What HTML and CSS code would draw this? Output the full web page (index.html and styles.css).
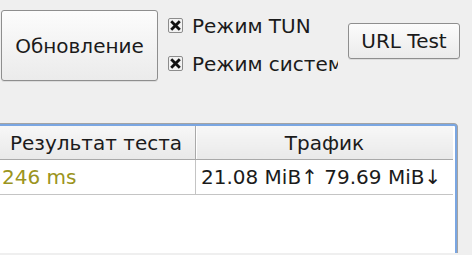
FILE: index.html
```html
<!DOCTYPE html>
<html lang="ru">
<head>
    <meta charset="UTF-8">
    <meta name="viewport" content="width=device-width, initial-scale=1.0">
    <title>Подключения</title>
    <link rel="stylesheet" href="styles.css">
</head>
<body>
    <div class="toolbar">
        <button class="btn btn-update">Обновление</button>
        <div class="checks">
            <label class="check">
                <svg class="box" width="15" height="15" viewBox="0 0 15 15">
                    <rect x="0.5" y="0.5" width="14" height="14" rx="1.5" fill="#f2f2f2" stroke="#8c8c8c"/>
                    <path d="M4.2 4.2 L10.8 10.8 M10.8 4.2 L4.2 10.8" stroke="#111" stroke-width="2.8" stroke-linecap="square"/>
                </svg>
                <span>Режим TUN</span>
            </label>
            <label class="check">
                <svg class="box" width="15" height="15" viewBox="0 0 15 15">
                    <rect x="0.5" y="0.5" width="14" height="14" rx="1.5" fill="#f2f2f2" stroke="#8c8c8c"/>
                    <path d="M4.2 4.2 L10.8 10.8 M10.8 4.2 L4.2 10.8" stroke="#111" stroke-width="2.8" stroke-linecap="square"/>
                </svg>
                <span>Режим системного прокси</span>
            </label>
        </div>
        <button class="btn btn-test">URL Test</button>
    </div>

    <div class="table-frame">
        <table class="results">
            <thead>
                <tr>
                    <th class="col-result">Результат теста</th>
                    <th class="col-traffic">Трафик</th>
                </tr>
            </thead>
            <tbody>
                <tr>
                    <td class="latency">246 ms</td>
                    <td>21.08 MiB↑ 79.69 MiB↓</td>
                </tr>
            </tbody>
        </table>
    </div>
</body>
</html>
```

FILE: styles.css
```css
body {
    margin: 0;
    background: #efefef;
    font-family: "DejaVu Sans", "Noto Sans", sans-serif;
    font-size: 20px;
    color: #1b1b1b;
    height: 255px;
    overflow: hidden;
}
.toolbar {
    display: flex;
    align-items: center;
    padding: 10px 0 0 1px;
    height: 71px;
}
.btn {
    font-family: inherit;
    font-size: 20px;
    color: #1b1b1b;
    border: 1px solid #8e8e8e;
    border-radius: 3px;
    background: linear-gradient(to bottom, #fcfcfc, #ebebeb);
    box-shadow: 0 1px 0 rgba(0, 0, 0, 0.08);
    padding: 0;
}
.btn-update {
    width: 157px;
    height: 71px;
    align-self: flex-start;
}
.btn-test {
    width: 112px;
    height: 36px;
    margin-left: 10px;
    margin-top: -10px;
}
.checks {
    width: 170px;
    margin-left: 10px;
    overflow: hidden;
    display: flex;
    flex-direction: column;
    gap: 15px;
    margin-top: -2px;
}
.check {
    display: flex;
    align-items: center;
    white-space: nowrap;
    height: 23px;
}
.check .box {
    flex: none;
    margin-right: 9px;
}
.table-frame {
    margin: 43px 0 0 -5px;
    width: 458px;
    height: 127px;
    background: #fff;
    border: 2px solid #7aa6e2;
    border-bottom: none;
    border-radius: 3px 3px 0 0;
    box-shadow: 1px 0 0 #a3a3a3, -1px 0 0 #a3a3a3, 0 -1px 0 #a3a3a3;
}
.results {
    border-collapse: collapse;
    width: 456px;
    table-layout: fixed;
}
.results th {
    font-weight: normal;
    height: 33px;
    padding: 0;
    background: linear-gradient(to bottom, #f7f7f7, #e9e9e9);
    border-right: 1px solid #a9a9a9;
    border-bottom: 1px solid #a9a9a9;
    box-shadow: inset 1px 0 0 #fff;
    text-align: center;
}
.results th:last-child {
    border-right: none;
}
.col-result {
    width: 198px;
}
.results td {
    height: 34px;
    padding: 0 0 0 5px;
    border-right: 1px solid #c4c4c4;
    border-bottom: 1px solid #c4c4c4;
    white-space: nowrap;
}
.results td:last-child {
    border-right: none;
}
.latency {
    color: #9b9420;
}
```
